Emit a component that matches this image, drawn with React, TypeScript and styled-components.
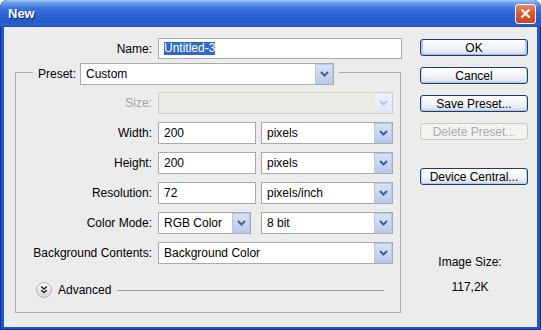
import React from "react";
import styled, { createGlobalStyle } from "styled-components";

const GlobalStyles = createGlobalStyle`
	html, body {
		margin: 0;
		padding: 0;
		background: #ffffff;
	}
	body {
		font-family: "Liberation Sans", Arial, sans-serif;
		font-size: 12px;
		color: #000;
	}
`;

const BODY_BG = "#ececec";

function Chevron({ disabled }: { disabled?: boolean }) {
	return (
		<svg width="9" height="6" viewBox="0 0 9 6">
			<path
				d="M1 1 L4.5 4.5 L8 1"
				fill="none"
				stroke={disabled ? "#b9c6dc" : "#4a5f86"}
				strokeWidth="2"
			/>
		</svg>
	);
}

function Select({
	width,
	value,
	disabled,
}: {
	width?: number;
	value?: string;
	disabled?: boolean;
}) {
	return (
		<StyledSelect $width={width} $disabled={disabled}>
			<SelectText>{value}</SelectText>
			<DropButton $disabled={disabled}>
				<Chevron disabled={disabled} />
			</DropButton>
		</StyledSelect>
	);
}

function App() {
	return (
		<>
			<GlobalStyles />
			<StyledWindow>
				<StyledTitleBar>
					<StyledTitle>New</StyledTitle>
					<StyledClose aria-label="close">
						<svg width="11" height="11" viewBox="0 0 11 11">
							<path d="M1.5 1.5 L9.5 9.5 M9.5 1.5 L1.5 9.5" stroke="#fff" strokeWidth="2.2" />
						</svg>
					</StyledClose>
				</StyledTitleBar>

				<StyledBody>
					<StyledMain>
						<StyledNameRow>
							<StyledLabel $width={148}>Name:</StyledLabel>
							<StyledField $width={244} $height={21}>
								<StyledSelection>Untitled-3</StyledSelection>
							</StyledField>
						</StyledNameRow>

						<StyledGroup>
							<StyledGroupHeader>
								<span>Preset:</span>
								<Select width={254} value="Custom" />
							</StyledGroupHeader>

							<StyledFormGrid>
								<StyledLabel $muted>Size:</StyledLabel>
								<Select disabled />

								<StyledLabel>Width:</StyledLabel>
								<StyledPair>
									<StyledField $width={98}>200</StyledField>
									<Select width={132} value="pixels" />
								</StyledPair>

								<StyledLabel>Height:</StyledLabel>
								<StyledPair>
									<StyledField $width={98}>200</StyledField>
									<Select width={132} value="pixels" />
								</StyledPair>

								<StyledLabel>Resolution:</StyledLabel>
								<StyledPair>
									<StyledField $width={98}>72</StyledField>
									<Select width={132} value="pixels/inch" />
								</StyledPair>

								<StyledLabel>Color Mode:</StyledLabel>
								<StyledPair>
									<Select width={93} value="RGB Color" />
									<Select width={132} value="8 bit" />
								</StyledPair>

								<StyledLabel>Background Contents:</StyledLabel>
								<Select value="Background Color" />
							</StyledFormGrid>

							<StyledAdvanced>
								<svg width="16" height="16" viewBox="0 0 16 16">
									<defs>
										<linearGradient id="adv" x1="0" y1="0" x2="0" y2="1">
											<stop offset="0" stopColor="#ffffff" />
											<stop offset="1" stopColor="#d6d6d6" />
										</linearGradient>
									</defs>
									<circle cx="8" cy="8" r="7.4" fill="url(#adv)" stroke="#b2b2b2" />
									<path
										d="M5.2 4.6 L8 7 L10.8 4.6 M5.2 8.2 L8 10.6 L10.8 8.2"
										fill="none"
										stroke="#2a2a2a"
										strokeWidth="1.5"
									/>
								</svg>
								<StyledAdvancedText>Advanced</StyledAdvancedText>
								<StyledRule />
							</StyledAdvanced>
						</StyledGroup>
					</StyledMain>

					<StyledSide>
						<StyledButton $default>OK</StyledButton>
						<StyledButton>Cancel</StyledButton>
						<StyledButton>Save Preset...</StyledButton>
						<StyledButton disabled>Delete Preset...</StyledButton>
						<StyledButton $spaced>Device Central...</StyledButton>

						<StyledInfo>
							<span>Image Size:</span>
							<span>117,2K</span>
						</StyledInfo>
					</StyledSide>
				</StyledBody>
			</StyledWindow>
		</>
	);
}

const StyledWindow = styled.div`
	width: 541px;
	height: 330px;
	display: flex;
	flex-direction: column;
	background: #2356c6;
	border-radius: 8px 8px 0 0;
	box-shadow: inset 1px 0 #0b2f8f, inset -1px 0 #0b2f8f, inset 0 -1px #0b2f8f;
	overflow: hidden;
`;

const StyledTitleBar = styled.div`
	height: 27px;
	flex-shrink: 0;
	display: flex;
	align-items: center;
	justify-content: space-between;
	padding: 0 5px 0 8px;
	background: linear-gradient(
		to bottom,
		#a9cbf6 0%,
		#6ea2ec 10%,
		#3b76dd 30%,
		#2a63d2 55%,
		#2459c8 80%,
		#2b62cf 92%,
		#1d4bb5 100%
	);
`;

const StyledTitle = styled.span`
	font-family: "Liberation Sans", Arial, sans-serif;
	font-weight: bold;
	font-size: 13px;
	color: #ffffff;
	text-shadow: 1px 1px 0 #0a246a;
`;

const StyledClose = styled.div`
	width: 21px;
	height: 20px;
	box-sizing: border-box;
	display: flex;
	align-items: center;
	justify-content: center;
	border: 1px solid #ffffff;
	border-radius: 3px;
	background: linear-gradient(to bottom, #e98a66 0%, #d95a33 45%, #c8461f 100%);
`;

const StyledBody = styled.div`
	flex: 1;
	margin: 0 4px 3px 4px;
	background: ${BODY_BG};
	display: flex;
	gap: 14px;
	padding-top: 11px;
`;

const StyledMain = styled.div`
	width: 402px;
	display: flex;
	flex-direction: column;
`;

const StyledNameRow = styled.div`
	display: flex;
	align-items: center;
	height: 21px;
`;

const StyledLabel = styled.span<{ $width?: number; $muted?: boolean }>`
	${({ $width }) => ($width ? `width: ${$width}px; margin-right: 6px;` : "")}
	text-align: right;
	white-space: nowrap;
	color: ${({ $muted }) => ($muted ? "#a3a3a3" : "#000")};
`;

const StyledField = styled.div<{ $width?: number; $height?: number }>`
	width: ${({ $width }) => ($width ? `${$width}px` : "100%")};
	height: ${({ $height }) => $height ?? 22}px;
	box-sizing: border-box;
	display: flex;
	align-items: center;
	padding-left: 5px;
	background: #ffffff;
	border: 1px solid #a7abb0;
	white-space: nowrap;
`;

const StyledSelection = styled.span`
	background: #316ac5;
	color: #ffffff;
	line-height: 13px;
`;

const StyledSelect = styled.div<{ $width?: number; $disabled?: boolean }>`
	width: ${({ $width }) => ($width ? `${$width}px` : "100%")};
	height: 22px;
	box-sizing: border-box;
	display: flex;
	align-items: stretch;
	background: ${({ $disabled }) => ($disabled ? "#ebebe6" : "#ffffff")};
	border: 1px solid ${({ $disabled }) => ($disabled ? "#cfcfc8" : "#a7abb0")};
`;

const SelectText = styled.span`
	flex: 1;
	display: flex;
	align-items: center;
	padding-left: 5px;
	white-space: nowrap;
	overflow: hidden;
`;

const DropButton = styled.span<{ $disabled?: boolean }>`
	width: 16px;
	display: flex;
	align-items: center;
	justify-content: center;
	border: 1px solid ${({ $disabled }) => ($disabled ? "#e3ebf8" : "#b7c8e8")};
	background: ${({ $disabled }) =>
		$disabled
			? "linear-gradient(to bottom, #eef3fc, #dfe8f8)"
			: "linear-gradient(to bottom, #d6e2f8, #b8cbee)"};
`;

const StyledGroup = styled.div`
	margin: 13px 0 0 11px;
	width: 386px;
	box-sizing: border-box;
	border: 1px solid #acacac;
	padding-bottom: 14px;
`;

const StyledGroupHeader = styled.div`
	display: flex;
	align-items: center;
	gap: 4px;
	width: fit-content;
	margin: -10px 0 0 17px;
	padding: 0 5px;
	background: ${BODY_BG};
`;

const StyledFormGrid = styled.div`
	display: grid;
	grid-template-columns: 136px 235px;
	grid-auto-rows: 22px;
	column-gap: 6px;
	row-gap: 8px;
	align-items: center;
	margin-top: 7px;
`;

const StyledPair = styled.div`
	display: flex;
	justify-content: space-between;
`;

const StyledAdvanced = styled.div`
	display: flex;
	align-items: center;
	height: 16px;
	margin-top: 18px;
	padding: 0 16px 0 20px;
`;

const StyledAdvancedText = styled.span`
	margin-left: 6px;
`;

const StyledRule = styled.div`
	flex: 1;
	margin-left: 6px;
	border-top: 1px solid #a0a0a0;
`;

const StyledSide = styled.div`
	width: 108px;
	display: flex;
	flex-direction: column;
	padding-top: 1px;
`;

const StyledButton = styled.div<{ $default?: boolean; $spaced?: boolean; disabled?: boolean }>`
	height: 17px;
	box-sizing: border-box;
	margin-top: ${({ $spaced, $default }) => ($default ? "0" : $spaced ? "28px" : "11px")};
	display: flex;
	align-items: center;
	justify-content: center;
	border-radius: 3px;
	white-space: nowrap;
	border: 1px solid ${({ disabled }) => (disabled ? "#c9c9c3" : "#1b3b78")};
	color: ${({ disabled }) => (disabled ? "#acacac" : "#000")};
	background: ${({ disabled }) =>
		disabled
			? "#f3f3f0"
			: "linear-gradient(to bottom, #ffffff 0%, #f2f4f8 50%, #dfe5ef 85%, #c9d3e3 100%)"};
	box-shadow: ${({ disabled, $default }) =>
		disabled
			? "none"
			: $default
				? "inset 2px 0 #b4c8ee, inset -2px 0 #b4c8ee, inset 0 -1px #9fb6e2"
				: "inset 1px 0 #c9d6ef, inset -1px 0 #c9d6ef, inset 0 -1px #b9c8e4"};
`;

const StyledInfo = styled.div`
	display: flex;
	flex-direction: column;
	align-items: center;
	gap: 11px;
	line-height: 14px;
	margin-top: 70px;
	padding-right: 8px;
`;

export default App;
